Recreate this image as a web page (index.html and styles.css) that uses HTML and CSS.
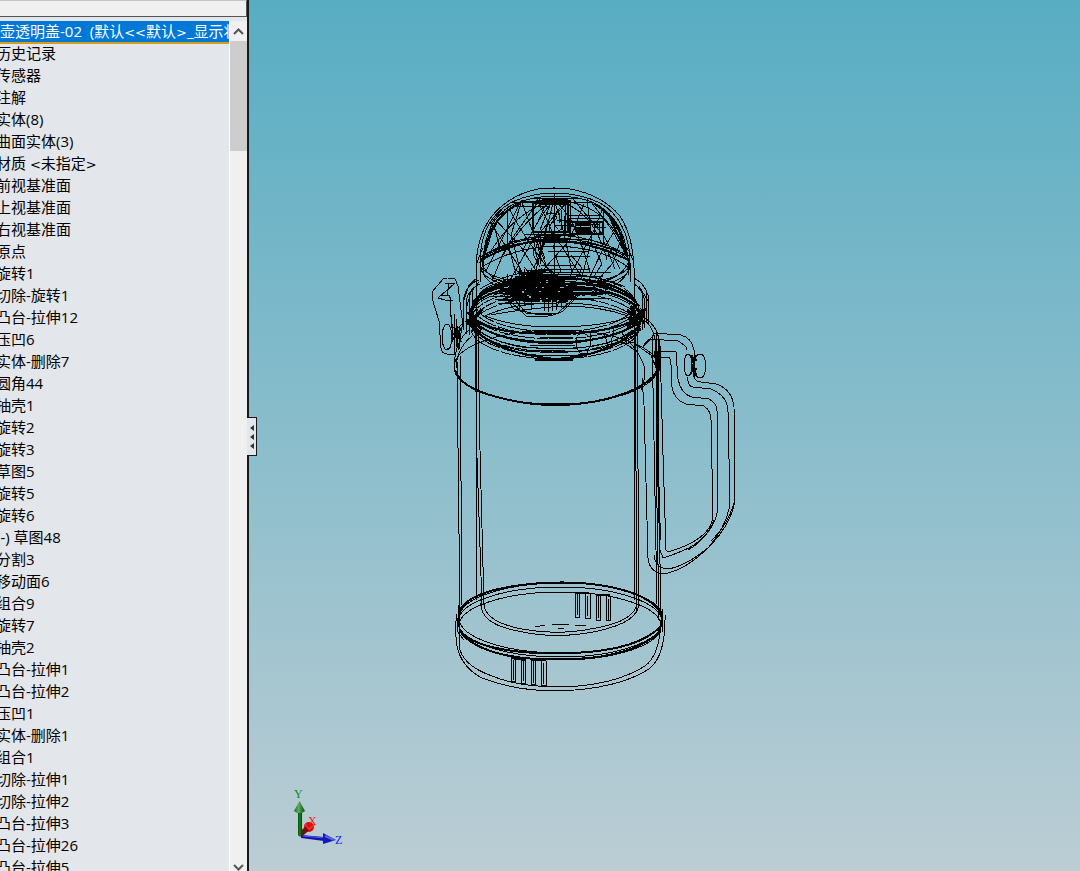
FILE: index.html
```html
<!DOCTYPE html>
<html lang="zh-CN">
<head>
    <meta charset="UTF-8">
    <meta name="viewport" content="width=device-width, initial-scale=1.0">
    <title>壶透明盖-02</title>
    <link rel="stylesheet" href="styles.css">
</head>
<body>
    <div class="app">
        <aside class="panel">
            <div class="panel-bar"></div>
            <div class="panel-body">
                <div class="tree">
                    <h1 class="tree-root">壶透明盖-02&nbsp; (默认<span class="sign">&lt;&lt;</span>默认<span class="sign">&gt;</span>_显示状态</h1>
                    <ul class="tree-list">
                        <li>历史记录</li>
                        <li>传感器</li>
                        <li>注解</li>
                        <li>实体(8)</li>
                        <li>曲面实体(3)</li>
                        <li>材质 <span class="sign">&lt;</span>未指定<span class="sign">&gt;</span></li>
                        <li>前视基准面</li>
                        <li>上视基准面</li>
                        <li>右视基准面</li>
                        <li>原点</li>
                        <li>旋转1</li>
                        <li>切除-旋转1</li>
                        <li>凸台-拉伸12</li>
                        <li>压凹6</li>
                        <li>实体-删除7</li>
                        <li>圆角44</li>
                        <li>抽壳1</li>
                        <li>旋转2</li>
                        <li>旋转3</li>
                        <li>草图5</li>
                        <li>旋转5</li>
                        <li>旋转6</li>
                        <li>(-) 草图48</li>
                        <li>分割3</li>
                        <li>移动面6</li>
                        <li>组合9</li>
                        <li>旋转7</li>
                        <li>抽壳2</li>
                        <li>凸台-拉伸1</li>
                        <li>凸台-拉伸2</li>
                        <li>压凹1</li>
                        <li>实体-删除1</li>
                        <li>组合1</li>
                        <li>切除-拉伸1</li>
                        <li>切除-拉伸2</li>
                        <li>凸台-拉伸3</li>
                        <li>凸台-拉伸26</li>
                        <li>凸台-拉伸5</li>
                    </ul>
                </div>
                <div class="scrollbar">
                    <button class="scroll-button" type="button" aria-label="向上滚动">
                        <svg width="11" height="7" viewBox="0 0 11 7"><path d="M1 6L5.500 1.500L10 6"/></svg>
                    </button>
                    <div class="scroll-thumb"></div>
                    <button class="scroll-button scroll-down" type="button" aria-label="向下滚动">
                        <svg width="11" height="7" viewBox="0 0 11 7"><path d="M1 1L5.500 5.500L10 1"/></svg>
                    </button>
                </div>
            </div>
            <button class="splitter" type="button" aria-label="折叠面板">
                <svg width="4" height="24" viewBox="0 0 4 24"><path d="M4 0V6L0 3ZM4 9V15L0 12ZM4 18V24L0 21Z"/></svg>
            </button>
        </aside>

        <main class="viewport">
            <svg class="model" viewBox="249 0 831 871" preserveAspectRatio="xMinYMin meet">
                <defs>
                    <clipPath id="dome-clip">
                        <path d="M480 282V263C480 236 490 214 512 202Q532 193 554 193Q580 193 600 203C620 214 630 237 630 263V282Z"/>
                    </clipPath>
                    <linearGradient id="greenShaft"><stop offset="0" stop-color="#064f0a"/><stop offset=".5" stop-color="#188320"/><stop offset="1" stop-color="#033b06"/></linearGradient>
                    <linearGradient id="greenCone"><stop offset="0" stop-color="#12661a"/><stop offset=".4" stop-color="#5cab60"/><stop offset="1" stop-color="#074d0b"/></linearGradient>
                </defs>

                <g class="wire">
                    <!-- lid dome -->
                    <path d="M476 600V265C477 248 480 232 492 216C502 204 518 193 538 189Q554 187 570 189C593 193 608 202 620 216C630 232 633 248 634 268V600"/>
                    <path d="M480 282V263C480 236 490 214 512 202Q532 193 554 193Q580 193 600 203C620 214 630 237 630 263V282"/>
                    <path d="M483 275V260C485 234 492 216 514 204Q534 196 554 196Q582 196 598 205C616 216 626 236 628 260V275"/>
                    <path d="M485 255C487 232 498 214 520 203M625 252C622 230 612 214 594 204M623 246L610 218M627 255L617 224" class="bold"/>
                    <ellipse cx="555" cy="263" rx="75" ry="22"/>
                    <ellipse cx="555" cy="266" rx="75" ry="25"/>
                    <path d="M480 261Q504 246 536 241Q582 237 628 260" class="bold"/>
                    <path d="M480 257Q504 243 536 238Q582 235 630 256M482 267Q512 248 554 246Q603 247 629 268M489 252Q520 236 554 235Q590 236 620 251"/>
                    <path d="M477 263Q480 254 483 248M634 263Q631 254 627 248M480 265Q484 282 501 288M630 263Q628 280 610 287M482 264Q490 281 508 282M628 263Q620 279 600 282"/>

                    <g clip-path="url(#dome-clip)">
                        <path d="M554 200L507 203L492 222L482 265M554 200Q515 211 489 254M554 200Q526 217 503 255M554 200Q537 219 522 252M554 200Q547 226 534 278M554 190V280M554 200Q564 226 572 274M554 200Q574 214 590 272M554 200Q594 208 607 260M554 200Q609 203 624 252"/>
                        <path d="M490 222L509 251L526 278M493 217L521 247L543 282M507 204Q519 231 558 282M521 200L535 238L547 267L563 282M536 197L553 233L581 276M573 199L604 236L620 269M592 203L612 230L628 258"/>
                        <path d="M505 209L492 232L484 258M520 203L503 237L486 271M540 199L506 247L492 281M568 201L533 240L510 280M584 204L569 241L535 279M603 208L594 230L569 278M617 227L601 253L588 281M621 239L613 263L597 281"/>
                        <path d="M494 225L500 249M507 207V240L516 274M521 203L511 235L523 281M587 199L592 239L581 280M603 209V240L615 269M541 255L534 267L541 281H552L561 271L554 252M571 255L582 268L576 281H561M594 246L602 264L593 278"/>
                    </g>

                    <!-- lid button and latch -->
                    <path d="M533 202V232H568V202ZM536 201H565M542 199H568" class="bold"/>
                    <path d="M520 202H590M530 198H578M516 206H550M539 200H570V204H539M570 202H593L605 211M524 234H604M538 235H575M551 236H561M521 239H591M543 242H570"/>
                    <path d="M534 203H569M544 201H564M570 222H603V234H570ZM568 219V232" class="bold"/>
                    <path d="M570 204V236M565 199V234M569 215H602M571 218H604M575 221V232M579 224H600M580 226V232H590V224M594 222V235M599 223V233M603 217V238M597 221V227H606M559 213V223M561 210V229M564 216V237M557 220H566M556 225H571M558 231H566M545 216Q552 209 557 218Q545 227 552 234L562 229M545 206L537 224M550 205L540 230M560 208Q545 226 544 235M556 215Q550 222 558 229"/>
                    <path d="M575 224H590M574 228H590M576 231H590M566 221H572M568 225H574M544 237H560M550 239H562" class="heavy"/>
                    <path d="M542 232L538 248L542 261M540 234L535 251L539 263M546 234L541 248L545 259M535 241L533 254L540 267M557 235L553 249"/>
                    <path d="M540 235V264M547 238L541 252M544 242L538 257"/>
                    <path d="M548 251H589M556 256H590M541 265H574M538 269H590M520 272H611M528 276H603"/>

                    <!-- upper collar -->
                    <g class="rings">
                        <ellipse cx="555" cy="303" rx="80" ry="29"/>
                        <ellipse cx="555" cy="306" rx="82" ry="29"/>
                        <ellipse cx="555" cy="310" rx="84" ry="29"/>
                        <ellipse cx="556" cy="313" rx="86" ry="30"/>
                        <ellipse cx="556" cy="317" rx="86" ry="32"/>
                        <ellipse cx="556" cy="320" rx="85" ry="32"/>
                        <ellipse cx="556" cy="324" rx="84" ry="32"/>
                        <ellipse cx="555" cy="328" rx="84" ry="31"/>
                    </g>
                    <path d="M473 303C483 285 514 278 554 278C596 278 630 287 638 306M472 309C480 292 512 286 550 286C602 287 633 296 640 314M476 300C492 285 516 281 545 281M570 282C600 284 624 290 636 303" class="bold"/>
                    <path d="M485 316Q514 302 566 303Q606 304 632 316Q604 327 554 327Q513 327 485 316ZM491 315Q522 309 564 306Q600 306 628 316"/>
                    <path d="M470 315Q491 335 545 333H571Q622 331 642 315M471 320Q496 342 549 343H569Q625 337 642 319M470 325Q494 353 555 359Q611 356 640 326" class="bold"/>
                    <path d="M544 332H571M535 359H573" class="heavy"/>
                    <path d="M473 322Q494 338 534 341H575Q614 338 637 325M478 330Q504 348 538 348H573Q611 347 633 330M484 337Q509 352 540 352H568Q613 350 632 336M540 337H573M530 345H575M534 350H565M525 355H583"/>
                    <path d="M468 312L480 325M469 318L482 329M471 309L477 333M466 320L480 332M627 310L645 323M631 306L640 331M629 321L646 309M627 327L644 314M468 325L482 309" class="heavy"/>
                    <path d="M463 330V301Q466 284 479 280M466 334V300Q470 288 480 284M469 335V294M472 332V291M479 282L471 292L466 309M634 278Q644 283 648 295V325M634 284Q641 288 644 298V328M642 330V292M646 322V290M477 278L469 285L464 300M639 286L648 301"/>

                    <!-- spout cluster inside the collar -->
                    <path d="M519 273H543M515 277H554M512 281H565M509 285H563M508 288H560M505 291H573M510 294H585M512 297H577M523 300H568" class="heavy dense"/>
                    <path d="M530 276H548M526 284H556M535 289H590M538 293H580M538 296H573" class="heavy"/>
                    <path d="M507 283H592M503 279H585M499 288H590M505 294H603M495 299H594M488 293H611M526 270H546M525 274H567M532 279H581M500 300H529M550 292H612M554 298H611M495 285H520M490 296H520M498 303H540"/>
                    <path d="M507 274L512 304M512 276L507 299M519 270V310M524 269V306M531 268V308M536 269L531 310M544 279V311M548 286V312M552 291V311M556 289V310M561 288V308M565 285L556 309M572 284L566 302M515 300L526 313H558L572 300M510 301L526 316Q550 319 563 311L578 296M504 296L514 309L535 314H552M500 289L511 304M516 270L530 281M524 267L544 290M542 268L520 289"/>
                    <path d="M480 289Q509 270 552 271M482 294Q515 276 558 275M493 285L545 274M625 287Q606 278 573 274M623 293Q588 276 551 277M608 290L583 280M604 283L617 275M597 286L610 278"/>
                    <path d="M576 337V347L580 353H587L590 346V331M604 333L609 348M614 328L610 349M622 332L627 344M577 336Q583 330 589 337M613 340Q626 342 634 350"/>

                    <!-- left clip -->
                    <path d="M432 292L443 279Q446 277 455 279L458 286L463 326M432 292V298L439 321L441 348Q442 354 447 354H456M445 283H455L438 298L445 300H453M449 284L447 296M441 295H449L451 300L450 318M450 301L453 342"/>
                    <ellipse cx="447" cy="337" rx="5" ry="13"/>
                    <path d="M445 350L451 347M454 314V354M456 319V345M452 324V338M458 328L463 323M464 316L458 350M459 327V349"/>
                    <path d="M454 327L461 342M453 340L461 328M452 334H461M457 326V347" class="bold"/>

                    <!-- shoulder and body -->
                    <ellipse cx="556" cy="367" rx="102" ry="37"/>
                    <path d="M455 370Q461 388 497 397Q551 412 607 399Q654 386 658 367" class="bold"/>
                    <path d="M469 330Q455 341 454 367L457 376M472 336Q457 348 456 368M642 316Q657 325 659 340V371M644 320Q652 325 655 339L657 370"/>
                    <path d="M457 360L460 620M460 354L462 605M478 328L480 450L484 605M475 324L477 458L482 606M635 328L637 610M637 329L639 605"/>
                    <path d="M652 334L654 440L657 604M656 333V450L659 620M658 340L659 515L661 612"/>
                    <path d="M657 354V478M658 468L660 540" class="bold"/>
                    <path d="M628 340Q642 356 645 369Q645 381 641 390M635 344L651 355L657 370M643 347L653 336M653 356L661 348M655 353L659 369"/>
                    <path d="M655 351L658 371M658 351V370" class="heavy"/>

                    <!-- handle -->
                    <path d="M653 333L681 335Q692 338 694 350V376Q695 382 701 382L716 384Q732 389 734 407L735 499Q733 521 711 545Q684 572 662 574Q649 571 648 558L644 405L642 378"/>
                    <path d="M643 346L649 339L678 341Q687 346 687 350M688 377Q687 386 693 387L711 389Q728 396 728 412L730 504Q727 525 709 547Q686 566 668 569Q655 568 654 555"/>
                    <path d="M658 351L676 352L678 379Q681 394 692 397L709 399Q717 403 717 411L718 508Q715 533 689 548Q676 554 663 558L660 550"/>
                    <path d="M658 357H669Q672 361 672 387Q674 400 686 404L704 406Q711 411 711 420L713 517Q710 540 668 552L666 550L663 455L660 345"/>
                    <path d="M735 499Q729 524 711 541M714 520Q707 539 688 550"/>
                    <ellipse cx="688" cy="365" rx="4" ry="11"/>
                    <ellipse cx="700" cy="366" rx="6" ry="12"/>
                    <path d="M692 355L696 376M696 355L691 374M692 360H697M691 369H697M694 357V377" class="bold"/>

                    <!-- inner floor -->
                    <path d="M481 603Q480 624 518 631Q556 640 598 631Q639 622 639 603M484 604Q485 622 522 629Q557 636 596 628Q635 621 637 603"/>
                    <path d="M535 627L545 625M552 624H569M575 625L586 626M558 628H564"/>

                    <!-- base rims -->
                    <ellipse cx="561" cy="618" rx="102" ry="35"/>
                    <ellipse cx="560" cy="622" rx="102" ry="35"/>
                    <ellipse cx="560" cy="626" rx="101" ry="34"/>
                    <path d="M459 612Q469 588 543 583Q598 580 635 594Q658 603 662 617M460 630Q473 649 535 653H574Q639 650 661 626M463 635Q484 656 536 659H574Q630 657 659 633" class="bold"/>
                    <path d="M457 614Q455 625 456 637Q457 665 482 678Q515 691 558 691Q618 689 649 669Q666 656 665 614M459 622V645Q461 665 492 676Q519 687 560 687Q613 686 645 666Q660 655 661 620M459 605L457 631L464 640M662 609V632"/>
                    <path d="M575 592V617H579V593M577 594V615M585 593V618H590V594M587 596V616M596 594V620H600V595M598 596V618M606 596V620H610V597M608 599V620"/>
                    <path d="M511 657V681H515V658M513 660V680M521 658V683H525V659M523 661V681M531 659V684H535V660M533 661V683M541 660V685H546V661M543 663V684"/>
                    <path d="M575 593L589 593M596 595H610M511 658L525 660M531 660H546" class="bold"/>
                </g>

                <!-- axis triad -->
                <g class="triad">
                    <circle cx="309" cy="827" r="5" fill="#d60e0e"/>
                    <path d="M301 834L309 827" stroke="#6d1111" stroke-width="5"/>
                    <path d="M305 824L309 829L314 825" fill="none" stroke="#ff2a22" stroke-width="2"/>
                    <path d="M298 812H302V835L300 837L298 835Z" fill="url(#greenShaft)"/>
                    <path d="M299.500 801L294 811L297 813H302L305 811Z" fill="url(#greenCone)"/>
                    <path d="M301 835L324 837V841L301 838Z" fill="#1212b4"/>
                    <path d="M303 836L324 838" stroke="#5656d5"/>
                    <path d="M323 833L336 840L323 844Z" fill="#1717b8"/>
                    <path d="M325 836L334 840" stroke="#5b62dc" stroke-width="2"/>
                    <text x="294" y="798" fill="#078b16">Y</text>
                    <text x="308" y="825" fill="#f51b1b">X</text>
                    <text x="335" y="844" fill="#1022ee">Z</text>
                </g>
            </svg>
        </main>
    </div>
</body>
</html>
```
FILE: styles.css
```css
* {
    box-sizing: border-box;
}
body {
    margin: 0;
    font-family: "Open Sans", "Noto Sans CJK SC", sans-serif;
    font-size: 15px;
    color: #000;
}
.app {
    display: flex;
    height: 100vh;
    overflow: hidden;
}
.panel {
    position: relative;
    display: flex;
    flex-direction: column;
    flex: 0 0 249px;
    min-width: 0;
    background: #e3e6eb;
    border-right: 2px solid #17191b;
}
.panel-bar {
    flex: 0 0 17px;
    background: #f0f0f0;
    border-top: 1px solid #c4c4c4;
    border-right: 1px solid #555;
    border-bottom: 1px solid #555;
}
.panel-body {
    display: flex;
    flex: 1;
    min-width: 0;
    min-height: 0;
    padding-top: 4px;
}
.tree {
    flex: 1;
    min-width: 0;
    overflow: hidden;
    border-right: 1px solid #fff;
}
.tree-root {
    height: 23px;
    margin: 0;
    overflow: hidden;
    background: #0078d7;
    border-bottom: 2px solid #d69e16;
    color: #fff;
    font-size: 15px;
    font-weight: normal;
    line-height: 20px;
    white-space: nowrap;
}
.sign {
    font-family: "DejaVu Sans", sans-serif;
    font-size: 13px;
}
.tree-list {
    margin: 0;
    padding: 0;
    list-style: none;
    line-height: 18px;
    text-indent: -4px;
    white-space: nowrap;
}
.tree-list li {
    height: 22px;
}
.scrollbar {
    display: flex;
    flex-direction: column;
    flex: 0 0 17px;
    width: 17px;
    background: #f0f0f0;
}
.scroll-button {
    display: flex;
    align-items: center;
    justify-content: center;
    height: 20px;
    padding: 0;
    background: #f0f0f0;
    border: 0;
}
.scroll-button path {
    fill: none;
    stroke: #555;
    stroke-width: 2;
}
.scroll-thumb {
    height: 110px;
    background: #cdcdcd;
}
.scroll-down {
    height: 8px;
    margin-top: auto;
}
.splitter {
    position: absolute;
    top: 417px;
    left: 247px;
    display: flex;
    align-items: center;
    justify-content: flex-end;
    width: 10px;
    height: 39px;
    padding: 0 2px;
    background: #e3e6eb;
    border: 1px solid #17191b;
    border-left: 0;
}
.splitter path {
    fill: #333;
}
.viewport {
    flex: 1;
    min-width: 0;
    background: linear-gradient(#58adc3, #bccdd4);
}
.model {
    display: block;
    width: 100%;
    height: 100%;
}
.wire {
    fill: none;
    stroke: #000;
    stroke-width: 1;
    shape-rendering: crispEdges;
}
.wire .bold {
    stroke-width: 2;
}
.wire .heavy {
    stroke-width: 3;
}
.wire .dense {
    stroke-dasharray: 17 2 9 1 5 2;
}
.rings {
    stroke-dasharray: 24 1 11 2;
}
.triad text {
    font-family: "Liberation Serif", serif;
    font-size: 12px;
}
```
